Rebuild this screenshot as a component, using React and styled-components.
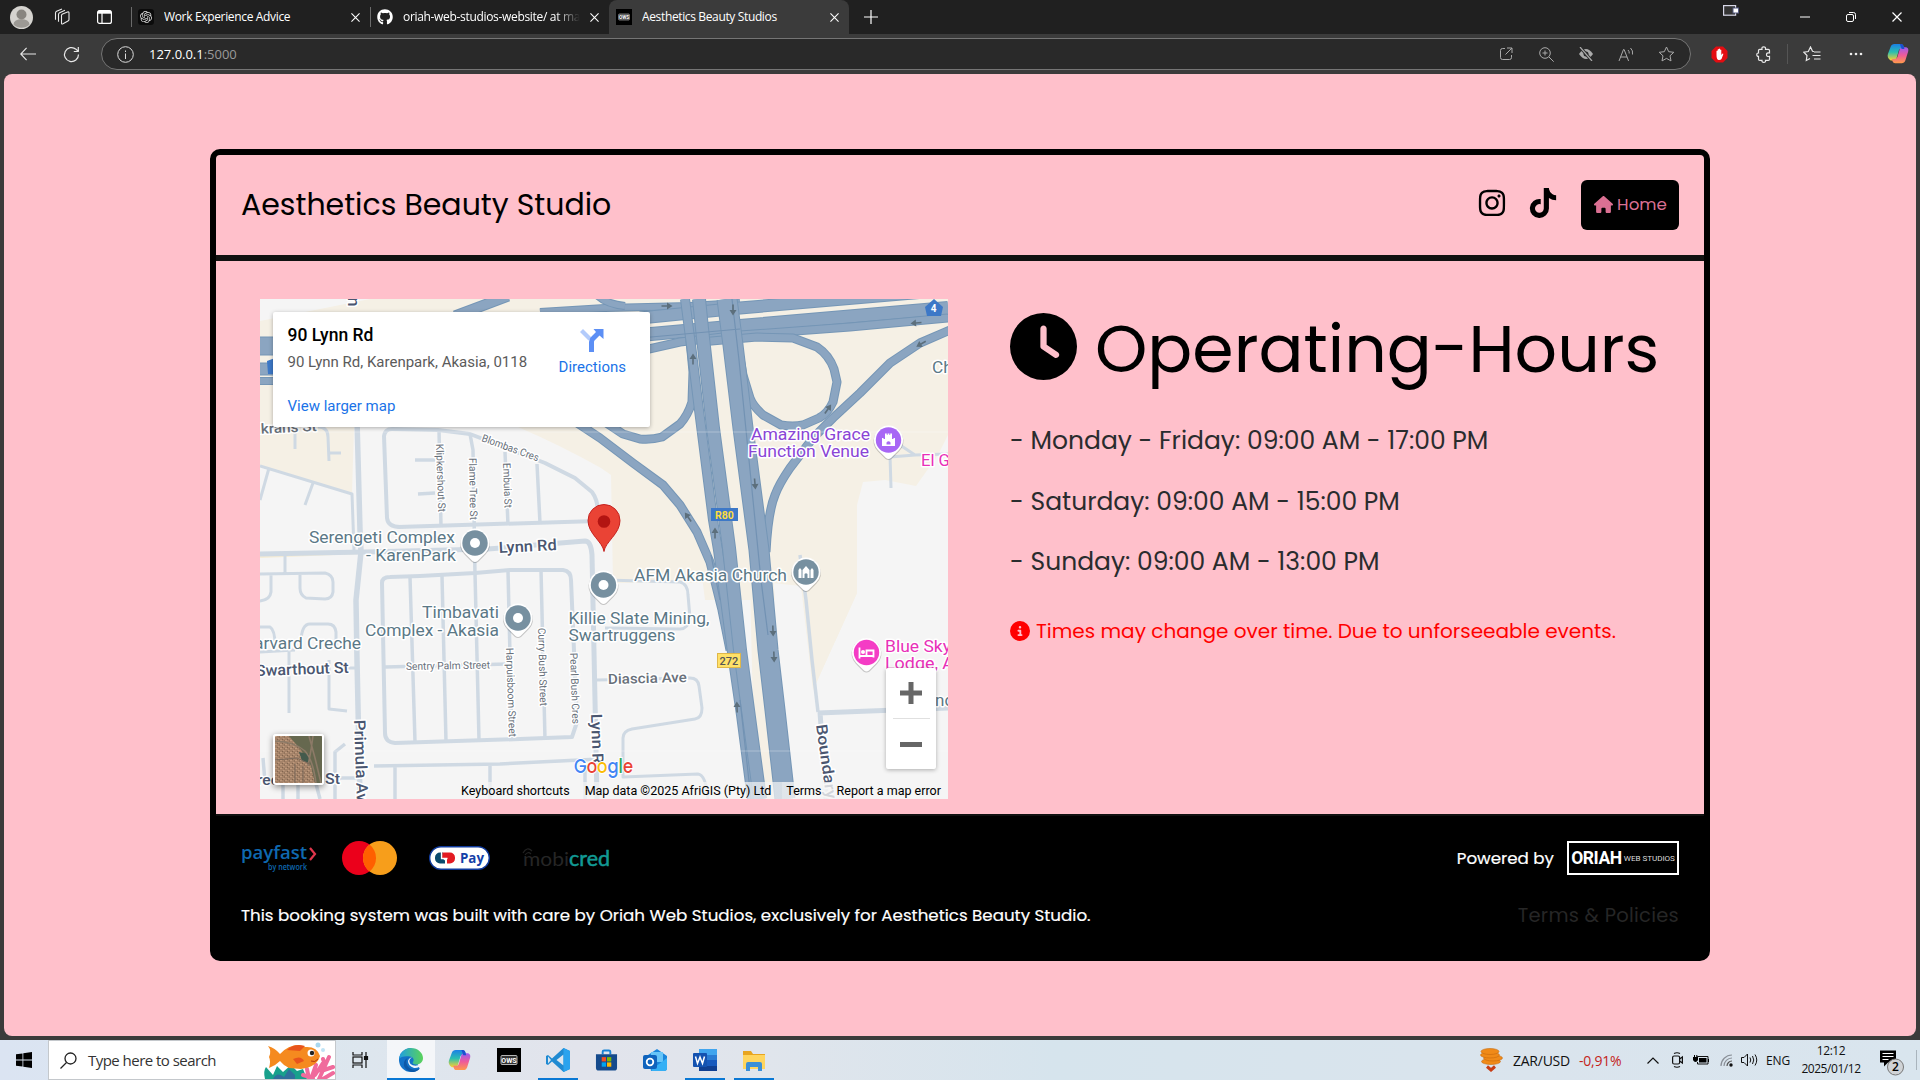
import React from "react";
import styled, { createGlobalStyle } from "styled-components";
import { FaInstagram, FaTiktok, FaHouse, FaClock, FaCircleInfo, FaGithub } from "react-icons/fa6";
import { SiOpenai } from "react-icons/si";

const poppins = `Poppins, Inter, "Open Sans", sans-serif`;
const segoe = `"Segoe UI", "Open Sans", "Noto Sans", sans-serif`;
const roboto = `Roboto, "Liberation Sans", sans-serif`;

const GlobalStyle = createGlobalStyle`
  * { box-sizing: border-box; }
  body { margin: 0; background: #3b3b3b; overflow: hidden; }
  svg { display: block; flex: none; }
  p, h1, h2 { margin: 0; font-weight: 400; }
`;

/* ---------- Browser chrome ---------- */
const Screen = styled.div`
  width: 1920px;
  height: 1080px;
  display: flex;
  flex-direction: column;
  background: #3b3b3b;
  font-family: ${segoe};
`;
const TabStrip = styled.div`
  height: 34px;
  display: flex;
  align-items: center;
  background: #202020;
  color: #fff;
`;
const ChromeIcon = styled.div`
  width: ${(p) => p.$w}px;
  height: 34px;
  display: flex;
  align-items: center;
  justify-content: center;
  padding-bottom: ${(p) => p.$pb || 0}px;
  color: #fff;
  flex: none;
`;
const Tab = styled.div`
  width: ${(p) => p.$w}px;
  height: 34px;
  display: flex;
  align-items: center;
  padding: 0 10px 0 ${(p) => (p.$active ? 7 : 6)}px;
  gap: 10px;
  flex: none;
  background: ${(p) => (p.$active ? "#3b3b3b" : "transparent")};
  border-radius: 8px 8px 0 0;
`;
const Divider = styled.span`
  width: 1px;
  height: 20px;
  margin-left: ${(p) => p.$ml || 0}px;
  background: ${(p) => p.$color || "#6b6b6b"};
  flex: none;
`;
const TabTitle = styled.span`
  flex: 1;
  min-width: 0;
  overflow: hidden;
  white-space: nowrap;
  font-size: 12px;
  letter-spacing: ${(p) => p.$ls || 0}px;
  line-height: 34px;
  mask-image: ${(p) => (p.$fade ? "linear-gradient(90deg, #000 86%, transparent)" : "none")};
`;
const Spacer = styled.div`
  flex: 1;
`;
const Toolbar = styled.div`
  height: 40px;
  display: flex;
  align-items: center;
  padding-left: 10px;
  color: #fff;
`;
const AddressBar = styled.div`
  width: 1590px;
  height: 32px;
  margin-left: 3px;
  display: flex;
  align-items: center;
  border: 1px solid #757575;
  border-radius: 16px;
  background: #292929;
  padding: 0 4px 0 15px;
`;
const Url = styled.span`
  margin-left: 15px;
  font-size: 13px;
  letter-spacing: -0.02px;
  color: #fff;
  span { color: #9a9a9a; }
`;
const Viewport = styled.div`
  height: 962px;
  margin: 0 4px 4px;
  border-radius: 8px;
  background: #ffc0cb;
  padding: 75px 206px 0;
`;

/* ---------- Page ---------- */
const Card = styled.div`
  height: 812px;
  border: 6px solid #000;
  border-radius: 10px;
  display: flex;
  flex-direction: column;
  font-family: ${poppins};
  background: linear-gradient(#ffc0cb 80%, #000 80%);
  overflow: hidden;
`;
const Header = styled.header`
  height: 106px;
  padding: 0 25px;
  display: flex;
  align-items: center;
  border-bottom: 6px solid #111;
  flex: none;
`;
const Brand = styled.h1`
  flex: 1;
  font-size: 30px;
  white-space: nowrap;
  color: #000;
`;
const Social = styled.a`
  display: flex;
  margin-right: ${(p) => p.$gap}px;
  padding-bottom: ${(p) => p.$pb}px;
  color: #000;
`;
const HomeButton = styled.a`
  width: 98px;
  height: 50px;
  display: flex;
  align-items: center;
  justify-content: center;
  gap: 4px;
  border-radius: 6px;
  background: #000;
  color: #db7093;
  font-size: 16.7px;
  padding: 0 0 2px 1px;
`;
const Main = styled.main`
  height: 553px;
  padding: 38px 44px 0;
  display: flex;
  gap: 62px;
  background: #ffc0cb;
  flex: none;
`;
const Hours = styled.section`
  flex: 1;
  padding-top: 12px;
  white-space: nowrap;
`;
const HoursTitle = styled.h2`
  height: 76px;
  display: flex;
  align-items: center;
  gap: 18px;
  font-size: 66.6px;
  color: #000;
  svg { margin-top: -6px; }
  span { margin-top: -1px; }
`;
const HoursList = styled.div`
  display: grid;
  grid-auto-rows: 60.5px;
  align-items: center;
  margin-top: 24px;
`;
const HoursLine = styled.p`
  font-size: 25px;
  color: #2a2c2e;
`;
const Notice = styled.p`
  display: flex;
  align-items: center;
  gap: 6px;
  margin-top: 23px;
  height: 30px;
  font-size: 20px;
  color: #f00;
`;
const Footer = styled.footer`
  flex: 1;
  background: #000;
  border-top: 2px solid #111;
  padding: 25px 25px 0;
  color: #fff;
`;
const FooterRow = styled.div`
  display: flex;
  align-items: center;
  justify-content: space-between;
  height: ${(p) => p.$h}px;
  margin-top: ${(p) => p.$mt || 0}px;
`;
const Logos = styled.div`
  display: flex;
  align-items: center;
`;
const LogoSlot = styled.div`
  margin-left: ${(p) => p.$ml || 0}px;
`;
const FooterText = styled.p`
  font-size: 16.68px;
  white-space: nowrap;
  -webkit-text-stroke: 0.2px #fff;
`;
const Terms = styled.a`
  font-size: 19.5px;
  color: #262626;
  letter-spacing: 0.25px;
`;
const Powered = styled.div`
  display: flex;
  align-items: center;
  gap: 13px;
`;
const OriahLogo = styled.div`
  width: 112px;
  height: 34px;
  border: 2px solid #fff;
  display: flex;
  align-items: center;
  justify-content: center;
  gap: 2px;
  font-family: ${roboto};
  white-space: nowrap;
  b { font-size: 17.5px; font-weight: 700; letter-spacing: -0.4px; }
  small { font-size: 8.1px; letter-spacing: -0.05px; color: #ddd; }
`;

/* ---------- Map ---------- */
const MapFrame = styled.div`
  position: relative;
  width: 688px;
  height: 500px;
  flex: none;
  overflow: hidden;
  font-family: ${roboto};
`;
const PlaceCard = styled.div`
  position: absolute;
  left: 13px;
  top: 13px;
  width: 377px;
  height: 115px;
  padding: 13px 24px 0 14.5px;
  display: flex;
  justify-content: space-between;
  background: #fff;
  border-radius: 2px;
  box-shadow: 0 1px 4px rgba(0, 0, 0, 0.3);
  white-space: nowrap;
`;
const PlaceName = styled.div`
  font-size: 17.5px;
  line-height: 21px;
  font-weight: 500;
  color: #000;
`;
const PlaceAddress = styled.div`
  margin-top: 6px;
  font-size: 15px;
  line-height: 20px;
  color: #5b5b5b;
`;
const MapLink = styled.a`
  display: block;
  margin-top: ${(p) => p.$mt}px;
  font-size: 15px;
  line-height: 20px;
  color: #1a73e8;
`;
const Directions = styled.div`
  display: flex;
  flex-direction: column;
  align-items: center;
  padding-top: 3px;
`;
const ZoomControl = styled.div`
  position: absolute;
  right: 12px;
  bottom: 30px;
  width: 50px;
  height: 101px;
  background: #fff;
  border-radius: 2px;
  box-shadow: 0 1px 4px rgba(0, 0, 0, 0.3);
  display: grid;
  grid-template-rows: 50px 1px 50px;
  place-items: center;
  hr { width: 37px; height: 1px; margin: 0; border: 0; background: #e0e0e0; }
`;
const Thumb = styled.div`
  position: absolute;
  left: 13px;
  top: 435px;
  width: 51px;
  height: 51px;
  border: 2px solid #fff;
  border-radius: 3px;
  box-shadow: 0 2px 6px rgba(0, 0, 0, 0.45);
  overflow: hidden;
`;
const MapFooter = styled.div`
  position: absolute;
  right: 0;
  bottom: 0;
  height: 17px;
  padding: 0 7px 0 5px;
  display: flex;
  align-items: center;
  gap: 15px;
  background: linear-gradient(90deg, rgba(245, 245, 245, 0.7) 326px, rgba(245, 245, 245, 0.8) 326px);
  font-size: 12.52px;
  color: #000;
  white-space: nowrap;
`;

/* ---------- Taskbar ---------- */
const Taskbar = styled.div`
  height: 40px;
  display: flex;
  align-items: center;
  background: linear-gradient(90deg, #dbe4f2 0%, #dbe7ef 14%, #e2e4ec 30%, #e0e5ec 40%, #d6e4ed 55%, #dae4ed 80%, #d9e5ee 100%);
  color: #111;
`;
const StartButton = styled.div`
  width: 48px;
  display: flex;
  justify-content: center;
`;
const SearchBox = styled.div`
  width: 288px;
  height: 40px;
  display: flex;
  align-items: center;
  padding-left: 11px;
  background: #fff;
  border: 1px solid #c4c8cc;
  font-size: 15px;
  letter-spacing: -0.53px;
  color: #333;
  span { flex: 1; margin-left: 11px; white-space: nowrap; }
`;
const AppSlot = styled.div`
  width: ${(p) => p.$w || 49}px;
  height: 40px;
  display: flex;
  align-items: center;
  justify-content: center;
  background: ${(p) => (p.$active ? "rgba(255,255,255,.65)" : "transparent")};
  background-image: ${(p) => (p.$open || p.$active ? "linear-gradient(#0a78d4, #0a78d4)" : "none")};
  background-repeat: no-repeat;
  background-position: bottom center;
  background-size: ${(p) => (p.$active ? "100%" : "40px")} 2px;
`;
const TrayItem = styled.div`
  width: ${(p) => p.$w}px;
  display: flex;
  justify-content: ${(p) => (p.$start ? "flex-start" : "center")};
  padding-top: ${(p) => p.$pt || 0}px;
  white-space: nowrap;
  flex: none;
  font-size: ${(p) => p.$fs || 14}px;
  letter-spacing: ${(p) => p.$ls || 0}px;
  color: ${(p) => p.$color || "#111"};
`;
const Clock = styled.div`
  width: 72px;
  font-size: 12px;
  line-height: 18px;
  letter-spacing: -0.45px;
  text-align: center;
  flex: none;
`;

const CloseX = ({ s = 9, w = 1.2 }) => (
  <svg width={s} height={s} viewBox="0 0 10 10" stroke="#fff" strokeWidth={w}><path d="M.5.5l9 9M9.5.5l-9 9" /></svg>
);
const Copilot = ({ s }) => (
  <svg width={s} height={s} viewBox="0 0 24 24">
    <defs>
      <linearGradient id={`cl${s}`} x1="0" y1="0" x2="0" y2="1"><stop offset="0" stopColor="#1a7fe8" /><stop offset=".5" stopColor="#2bbfb0" /><stop offset="1" stopColor="#ffd02e" /></linearGradient>
      <linearGradient id={`cr${s}`} x1="0" y1="0" x2="0" y2="1"><stop offset="0" stopColor="#9a5cf0" /><stop offset=".5" stopColor="#ee5a9b" /><stop offset="1" stopColor="#ff9a4a" /></linearGradient>
    </defs>
    <path d="M8 2h7c2 0 2.600 1 3.200 3l.6 2h-3c-2 0-2.600 1-3.200 3l-2 7c-.6 2-1.400 3-3.400 3H4C1 18 .2 15.500 1 13L4 5c.8-2 2-3 4-3z" fill={`url(#cl${s})`} transform="translate(0 -1)" />
    <path d="M16 22H9c-2 0-2.600-1-3.200-3l-.4-1.500h2.800c2 0 2.800-1 3.400-3l2-7c.6-2 1.400-3 3.400-3h3c3 0 3.800 2.500 3 5l-3 9.500c-.8 2-2 3-4 3z" fill={`url(#cr${s})`} />
    <path d="M14 1h1.500c1.500 0 2.300 1 2.800 3l.7 2.500h-3L14 1z" fill="#1d4fd0" />
  </svg>
);
const OwsIcon = ({ s }) => (
  <svg width={s} height={s} viewBox="0 0 24 24">
    <rect width="24" height="24" fill="#000" />
    <rect x="4" y="7.500" width="16" height="9" rx="1" fill="#333" stroke="#ddd" strokeWidth=".8" />
    <text x="12" y="14.700" fontSize="7" fontWeight="700" textAnchor="middle" fill="#fff" fontFamily="Roboto, sans-serif">OWS</text>
  </svg>
);

function BrowserTabs() {
  return (
    <TabStrip>
      <ChromeIcon $w={43}>
        <svg width="23" height="23" viewBox="0 0 23 23"><circle cx="11.500" cy="11.500" r="11.500" fill="#d5d3cf" /><circle cx="11.500" cy="8.500" r="5" fill="#888580" /><path d="M3.500 18.500a8 5.500 0 0 1 16 0 11.500 11.500 0 0 1-16 0z" fill="#9c9994" /></svg>
      </ChromeIcon>
      <ChromeIcon $w={38}>
        <svg width="18" height="18" viewBox="0 0 18 18" fill="none" stroke="#e8e8e8" strokeWidth="1.100" strokeLinejoin="round"><path d="M8.500 7.500Q8.500 6.300 9.600 5.900L14.500 4Q16 3.500 16 5V11.500Q16 12.500 15 13L10 15.800Q8.500 16.500 8.500 15zM5.500 13.800V6.500Q5.500 5.200 6.600 4.700L12 2.200M2.500 11.800V5Q2.500 3.700 3.600 3.200L9 1" /></svg>
      </ChromeIcon>
      <ChromeIcon $w={46}>
        <svg width="15" height="14" viewBox="0 0 15 14" fill="none" stroke="#fff" strokeWidth="1.200"><rect x=".6" y=".6" width="13.800" height="12.800" rx="2" /><path d="M1 2.200h13" strokeWidth="3" /><path d="M5 3v10" /></svg>
      </ChromeIcon>
      <Divider $ml={4} />
      <Tab $w={238}>
        <svg width="16" height="16" viewBox="0 0 16 16"><rect width="16" height="16" rx="3" fill="#0b0b0b" /><g transform="translate(2 2)" color="#ddd"><SiOpenai size={12} /></g></svg>
        <TabTitle $ls={-0.34}>Work Experience Advice</TabTitle>
        <CloseX />
      </Tab>
      <Divider />
      <Tab $w={238}>
        <FaGithub size={16} color="#fff" />
        <TabTitle $fade $ls={-0.32}>oriah-web-studios-website/ at main</TabTitle>
        <CloseX />
      </Tab>
      <Tab $w={240} $active>
        <OwsIcon s={16} />
        <TabTitle $ls={-0.36}>Aesthetics Beauty Studios</TabTitle>
        <CloseX />
      </Tab>
      <ChromeIcon $w={44}>
        <svg width="14" height="14" viewBox="0 0 14 14" stroke="#fff" strokeWidth="1.200"><path d="M7 0v14M0 7h14" /></svg>
      </ChromeIcon>
      <Spacer />
      <ChromeIcon $w={102} $pb={13}>
        <svg width="16" height="11" viewBox="0 0 16 11"><rect x=".6" y=".6" width="12" height="9.600" fill="#333" stroke="#d8d8e8" strokeWidth="1.200" /><rect x="10" y="3" width="5.500" height="5" fill="#fff" stroke="#555a80" /></svg>
      </ChromeIcon>
      <ChromeIcon $w={46}><svg width="10" height="2"><path d="M0 1h10" stroke="#fff" /></svg></ChromeIcon>
      <ChromeIcon $w={46}>
        <svg width="10" height="10" viewBox="0 0 10 10" fill="none" stroke="#fff"><rect x=".5" y="2.500" width="7" height="7" rx="1.500" /><path d="M3 .5h4.500a2 2 0 0 1 2 2V7" /></svg>
      </ChromeIcon>
      <ChromeIcon $w={46}><CloseX s={10} /></ChromeIcon>
    </TabStrip>
  );
}

function BrowserToolbar() {
  return (
    <Toolbar>
      <ChromeIcon $w={35}>
        <svg width="16" height="14" viewBox="0 0 17 14" fill="none" stroke="#e8e8e8" strokeWidth="1.200"><path d="M7 .5.800 7 7 13.500M1 7h16" /></svg>
      </ChromeIcon>
      <ChromeIcon $w={53}>
        <svg width="17" height="17" viewBox="0 0 17 17" fill="none" stroke="#e8e8e8" strokeWidth="1.200"><path d="M15.500 8.500A7 7 0 1 1 13 3.200L15.300 5.500M15.300 1v4.500h-4.500" /></svg>
      </ChromeIcon>
      <AddressBar>
        <svg width="17" height="17" viewBox="0 0 17 17" fill="none" stroke="#ddd"><circle cx="8.500" cy="8.500" r="7.800" /><path d="M8.500 7.500V13M8.500 4.500V6" /></svg>
        <Url>127.0.0.1<span>:5000</span></Url>
        <Spacer />
        <ChromeIcon $w={40}><svg width="14" height="14" viewBox="0 0 14 14" fill="none" stroke="#aaa"><path d="M6 1.500H3.500a2 2 0 0 0-2 2v7a2 2 0 0 0 2 2h7a2 2 0 0 0 2-2V8M8 1h5v5M13 1 6.500 7.500" /></svg></ChromeIcon>
        <ChromeIcon $w={40}><svg width="15" height="15" viewBox="0 0 15 15" fill="none" stroke="#aaa"><circle cx="6" cy="6" r="5.300" /><path d="M6 3.500v5M3.500 6h5M10 10l4.700 4.700" /></svg></ChromeIcon>
        <ChromeIcon $w={40}><svg width="16" height="14" viewBox="0 0 16 14"><path d="M1 7q7-10 14 0-7 10-14 0z" fill="#aaa" /><circle cx="8" cy="7" r="2.500" fill="#292929" /><path d="M2 0l12 14" stroke="#292929" strokeWidth="3" /><path d="M2 0l12 14" stroke="#aaa" strokeWidth="1.200" /></svg></ChromeIcon>
        <ChromeIcon $w={40}><svg width="17" height="15" viewBox="0 0 17 15" fill="none" stroke="#aaa"><path d="M1 14 5.500 2.500h.6L10.600 14M2.600 10h6.500M10 3q1.500 1.500 1.200 3.500M12.500 1q2.800 2.500 2 6.500" /></svg></ChromeIcon>
        <ChromeIcon $w={40}><svg width="17" height="16" viewBox="0 0 17 16" fill="none" stroke="#aaa"><path d="m8.500 1 2.200 4.700 5.100.6-3.800 3.500 1 5.100-4.500-2.500L4 14.900l1-5.100L1.200 6.300l5.100-.6z" /></svg></ChromeIcon>
      </AddressBar>
      <ChromeIcon $w={56}>
        <svg width="17" height="17" viewBox="0 0 17 17"><path d="M5 .5h7L16.500 5v7L12 16.500H5L.5 12V5z" fill="#e40d12" /><path d="M5.500 9V5q1-.8 1.200 0V3.500q1-.8 1.200 0V3q1-.8 1.200 0v1q1-.8 1.200 0v5l1.300-1.500q1 0 .7.800L10.500 13q-1 1.300-3 1-2-.5-2-5z" fill="#fff" /></svg>
      </ChromeIcon>
      <ChromeIcon $w={34}>
        <svg width="17" height="17" viewBox="0 0 17 17" fill="none" stroke="#e8e8e8" strokeWidth="1.200"><path d="M2.500 4.500q0-1.200 1.200-1.200H6q-.5-2.500 1.700-2.500t1.800 2.500h2.800q1.200 0 1.200 1.200V7q-3-.6-3 1.700t3 1.700v2.800q0 1.200-1.200 1.200H9.500q.4 2-1.700 2T6 14.400H3.700q-1.200 0-1.200-1.200v-2.800Q.8 10.500.8 8.700T2.500 7z" /></svg>
      </ChromeIcon>
      <ChromeIcon $w={13}><Divider $color="#555" /></ChromeIcon>
      <ChromeIcon $w={36}>
        <svg width="18" height="16" viewBox="0 0 18 16" fill="none" stroke="#e8e8e8" strokeWidth="1.200"><path d="M11 5.500 9.500 5.300 7.500 1 5.300 5.500.8 6.200 4 9.500 3.300 14.500 7 12.500M11 6h6.500M9.500 9.500h8M11 13h6.500" /></svg>
      </ChromeIcon>
      <ChromeIcon $w={51}>
        <svg width="14" height="4" fill="#eee"><circle cx="2" cy="2" r="1.300" /><circle cx="7" cy="2" r="1.300" /><circle cx="12" cy="2" r="1.300" /></svg>
      </ChromeIcon>
      <ChromeIcon $w={34}><Copilot s={22} /></ChromeIcon>
    </Toolbar>
  );
}

/* Streets, one polyline per entry: [path, width] */
const streets = [
  ["M357 420 360 530 361 552 356 600 357 660 360 799", 5.5],
  ["M260 554 365 552 488 549 585 541Q591 541 592 555L595 700 597 799", 5],
  ["M400 527Q388 527 387 518L384 436Q385 429 392 429L438 430 470 434 545 463 575 478 592 492Q600 503 597 521L398 527", 4],
  ["M439 430 441 527M470 434 473 450 475 575M505 452 508 525M537 464 540 523M415 460h20M418 494l17-1", 3.5],
  ["M318 427Q328 427 328 437L329 461M328 453h13M295 433v16M260 466 352 494 354 550M269 468 260 500M313 483 305 505", 3],
  ["M260 574 325 573Q333 575 333 582V592Q332 599 325 599L306 598Q300 595 300 588V575M285 552v21M271 575V592Q270 600 260 601", 3],
  ["M301 644Q301 624 310 624H328Q335 624 336 632V645M260 627H270Q275 630 275 645M260 652 295 650M289 652V713M329 660V709L347 711M345 668h12", 3],
  ["M382 583Q382 577 390 577L420 576 475 573 510 570H563Q571 571 571 580L577 722 572 737 520 739 395 743Q385 742 385 733Z", 4],
  ["M410 577 415 742M442 576 446 742M475 573 479 740M508 571 512 740M541 570 545 740M385 667 508 664", 3.5],
  ["M374 766 500 764 600 759M395 767V799M490 765V799M585 765V799M263 758 265 782M345 744 335 752V799M340 778h20M283 775V799M315 780 320 799M298 785v14", 3.5],
  ["M605 580 680 582Q688 584 688 595L690 618Q688 629 680 629L605 628", 3],
  ["M597 680 690 678Q698 678 699 686L702 708Q702 718 695 719L632 729Q623 731 623 738V777L698 774Q706 775 708 799", 3],
  ["M800 555 806 600 812 660 818 712", 3.5],
  ["M818 713 948 708M820 712 826 799", 5],
  ["M890 455 891 488M890 457 915 455 948 454M900 445 915 455", 3],
];
const highways = [
  ["M455 316 508 296", 10], ["M540 312 605 308 690 306 740 303", 7], ["M596 294Q605 304 625 306", 7],
  ["M260 346h20", 18], ["M260 369h20", 12], ["M260 381h20", 7],
  ["M640 318 740 308 948 290", 12],
  ["M640 335 740 326 948 308", 13],
  ["M640 351 680 342 740 335 850 327 948 318", 8],
  ["M700 342 757 337 793 338 817 347Q829 355 834 369L837 382 833 402Q828 413 819 418L803 425Q793 427 781 425L763 415Q753 406 750 398L743 375 733 320", 8],
  ["M690 340 693 372 692 402Q688 415 680 424L662 437Q652 440 640 439L623 434 605 422", 8],
  ["M565 415 600 438 633 463 663 485 680 505 697 532 710 562 722 610 730 650", 8],
  ["M950 330 920 343 890 363 860 393 833 418 813 438 790 468Q779 484 775 495 768 512 766 552", 8],
  ["M685 299 691 345 699 410 713 520 718 550 725 600 733 660 741 715 752 799", 9],
  ["M699 299 703 338 713 428 729 548 740 650 748 710 760 799", 13],
  ["M727 299 733 345 743 428 759 550 768 650 775 710 785 799", 20],
];
const lanes = "M732 299 739 360 751 480 761 580 768 635M711 555 720 600M740 700 751 799M640 338 740 329";
const arrows = [
  [667, 306, 90], [733, 310, 180], [693, 359, 0], [916, 323, -95], [921, 344, -120], [828, 409, 35],
  [755, 484, 175], [688, 517, -35], [715, 533, 0], [773, 631, 178], [774, 657, 178], [737, 707, -2],
];

const MapLabel = styled.text`
  font-family: ${roboto};
  font-size: ${(p) => p.$size || 17}px;
  font-weight: ${(p) => p.$weight || 400};
  fill: ${(p) => p.$fill || "#5b7886"};
  stroke: #fff;
  stroke-width: 3px;
  stroke-linejoin: round;
  paint-order: stroke;
`;
const Label = ({ x, y, w, r, children, ...rest }) => (
  <MapLabel x={x} y={y} textLength={w} lengthAdjust="spacingAndGlyphs" transform={r ? `rotate(${r} ${x} ${y})` : undefined} {...rest}>{children}</MapLabel>
);
const Poi = ({ x, y, fill = "#7790a0", children }) => (
  <g transform={`translate(${x} ${y})`}>
    <path d="M0-15A15 15 0 0 1 10.500 10.500L3 18Q0 20 -3 18L-10.500 10.500A15 15 0 0 1 0-15z" fill="#0003" transform="translate(0 1)" />
    <path d="M0-14.500A14.500 14.500 0 0 1 10.300 10.300L2.500 18Q0 20-2.500 18L-10.300 10.300A14.500 14.500 0 0 1 0-14.500z" fill="#fff" />
    <circle r="12.700" fill={fill} />
    {children || <circle r="5" fill="#fff" />}
  </g>
);
const small = { $size: 10.5, $fill: "#68707a" };
const road = { $size: 15.5, $fill: "#4a5670", $weight: 500 };

function StreetMap() {
  return (
    <svg width="688" height="500" viewBox="260 299 688 500">
      <rect x="260" y="299" width="688" height="500" fill="#f5f0e5" />
      <g fill="#f5f5f5">
        <path d="M260 299H370L260 321z" />
        <path d="M260 466 352 494 354 427H518Q560 445 601 468L611 475 613 583H815L813 690 857 593V505L863 482 885 480 916 486 938 455 948 435V799H260z" />
      </g>
      <path d="M260 556 360 552" stroke="#f5ecd5" strokeWidth="4" />
      <path d="M750 583H772L793 799H755zM700 560 772 560 775 600H705zM772 583 801 586 813 690 857 593V550H765z" fill="#f5f0e5" />
      <g fill="none" stroke="#cfd9e3" strokeLinejoin="round">
        {streets.map(([d, w]) => <path key={d} d={d} strokeWidth={w} />)}
      </g>
      <g fill="none" strokeLinejoin="round">
        {highways.map(([d, w]) => (
          <g key={d}><path d={d} stroke="#7596b6" strokeWidth={w + 1} /><path d={d} stroke="#8ba5c1" strokeWidth={w - 1} /></g>
        ))}
        <path d={lanes} stroke="#7292b3" strokeWidth="1.200" />
      </g>
      <path d="M260 432H948M260 751H948" stroke="#fff" strokeOpacity=".3" />
      {arrows.map(([x, y, r]) => (
        <path key={`${x}-${y}`} transform={`translate(${x} ${y}) rotate(${r})`} d="M0-5.500 3.500 0H.8V5.500H-.8V0H-3.500z" fill="#5c6f7c" />
      ))}
      <Label x={348} y={297} r={90} {...road} $size={17}>n</Label>
      <Label x={257} y={434} w={60} r={-3} {...road} $size={14} $fill="#68707a">ikrans St</Label>
      <Label x={481} y={441} w={60} r={20} {...small}>Blombas Cres</Label>
      <Label x={436} y={444} w={68} r={88} {...small}>Klipkershout St</Label>
      <Label x={469} y={458} w={62} r={89} {...small}>Flame Tree St</Label>
      <Label x={503} y={463} w={45} r={88} {...small}>Embuia St</Label>
      <Label x={309} y={543} w={146}>Serengeti Complex</Label>
      <Label x={366} y={561} w={90}>- KarenPark</Label>
      <Label x={499} y={553} w={58} r={-3} {...road}>Lynn Rd</Label>
      <Label x={422} y={618} w={77}>Timbavati</Label>
      <Label x={365} y={636} w={134}>Complex - Akasia</Label>
      <Label x={254} y={649} w={107}>arvard Creche</Label>
      <Label x={256} y={676} w={93} r={-2} {...road}>Swarthout St</Label>
      <Label x={406} y={670} w={84} r={-1} {...small}>Sentry Palm Street</Label>
      <Label x={506} y={648} w={89} r={88} {...small}>Harpuisboom Street</Label>
      <Label x={538} y={628} w={78} r={88.500} {...small}>Curry Bush Street</Label>
      <Label x={570} y={653} w={71} r={88} {...small}>Pearl Bush Cres</Label>
      <Label x={354} y={720} w={82} r={88} {...road} $size={16}>Primula Av</Label>
      <Label x={591} y={714} w={50} r={88} {...road}>Lynn R</Label>
      <Label x={257} y={785} w={22} {...road}>ree</Label>
      <Label x={325} y={784} w={15} {...road}>St</Label>
      <Label x={568.5} y={624} w={141}>Killie Slate Mining,</Label>
      <Label x={568.5} y={641} w={107}>Swartruggens</Label>
      <Label x={634} y={581} w={153}>AFM Akasia Church</Label>
      <Label x={608} y={684} w={79} r={-1.500} {...road} $size={14} $fill="#68707a">Diascia Ave</Label>
      <Label x={816} y={725} w={75} r={82} {...road}>Boundary</Label>
      <Label x={932} y={373} w={30}>Che</Label>
      <Label x={751} y={440} w={119} $fill="#8a45d6">Amazing Grace</Label>
      <Label x={748} y={457} w={121} $fill="#8a45d6">Function Venue</Label>
      <Label x={921} y={466} w={38} $fill="#e830b8">El Ga</Label>
      <Label x={885} y={652} w={66} $fill="#e830b8">Blue Sky</Label>
      <Label x={885} y={669} w={69} $fill="#e830b8">Lodge, A</Label>
      <Label x={935} y={706} w={28}>nco</Label>
      <Poi x={475} y={543} /><Poi x={518} y={618} /><Poi x={603.5} y={585} />
      <Poi x={806} y={572}><path d="M-7.500 6V-2l1.500-2L-4.500-2V6zM4.500 6V-2L6-4 7.500-2V6zM-3.500 6V-2L0-6 3.500-2V6H1.500V2Q0 .5-1.500 2V6z" fill="#fff" /></Poi>
      <Poi x={888.500} y={440} fill="#a866f5"><path d="M-3.500-6.500H-1.700V-5H-.9V-6.500H.9V-5H1.700V-6.500H3.500V-1H5V-2H6.500V6H-6.500V-2H-5V-1H-3.500zM-2 4.500H2V2.500Q0 0-2 2.500z" fill="#fff" fillRule="evenodd" /></Poi>
      <Poi x={866.500} y={652.500} fill="#f43cc5"><path d="M-7-5V6M-7 3.500H7M7 5V-2H0V3" fill="none" stroke="#fff" strokeWidth="1.800" /><circle cx="-3.500" cy="-.5" r="2" fill="#fff" /></Poi>
      <g transform="translate(604 550)">
        <path d="M0 1.500C-1-8-16-16-16-29.500A16 16 0 0 1 16-29.500C16-16 1-8 0 1.500z" fill="#ea4335" stroke="#c5221f" />
        <circle cy="-28.500" r="6.300" fill="#b31412" />
      </g>
      <path d="M925 307 934 299 943 307 941 316H927z" fill="#3d78c7" /><text x="933.500" y="312" fontSize="10" fontWeight="700" fill="#fff" textAnchor="middle" fontFamily="Roboto">4</text>
      <path d="M267 361 275 358V374H268z" fill="#3d78c7" />
      <rect x="711" y="508" width="27" height="13" fill="#3d78c7" /><text x="724.500" y="518.500" fontSize="10.500" fontWeight="700" fill="#ffdc3c" textAnchor="middle" fontFamily="Roboto">R80</text>
      <rect x="717.500" y="653.500" width="23" height="14" fill="#ffe168" stroke="#dfb74a" /><text x="729" y="664.500" fontSize="11" fontWeight="500" fill="#555" textAnchor="middle" fontFamily="Roboto">272</text>
      <text x="574" y="773" fontSize="20" fontWeight="500" textLength="59" stroke="#fff" strokeWidth="2" paintOrder="stroke" fontFamily="Poppins, Roboto, sans-serif" lengthAdjust="spacingAndGlyphs"><tspan fill="#4285f4">G</tspan><tspan fill="#ea4335">o</tspan><tspan fill="#fbbc05">o</tspan><tspan fill="#4285f4">g</tspan><tspan fill="#34a853">l</tspan><tspan fill="#ea4335">e</tspan></text>
    </svg>
  );
}

function MapPanel() {
  return (
    <MapFrame>
      <StreetMap />
      <PlaceCard>
        <div>
          <PlaceName>90 Lynn Rd</PlaceName>
          <PlaceAddress>90 Lynn Rd, Karenpark, Akasia, 0118</PlaceAddress>
          <MapLink $mt={24}>View larger map</MapLink>
        </div>
        <Directions>
          <svg width="24" height="24" viewBox="0 0 24 24"><path d="M3 1 11.500 9.500 8.500 12.500 0 4z" fill="#b3cbfb" /><path d="M9 24V14Q9 11 11 9L16 4 13.500 1H23.500V11L19.500 7.500 14.500 12.500Q14 13 14 14V24z" fill="#5c8ff5" /></svg>
          <MapLink $mt={5}>Directions</MapLink>
        </Directions>
      </PlaceCard>
      <Thumb>
        <svg width="47" height="47" viewBox="0 0 47 47">
          <defs><pattern id="houses" width="5" height="4" patternUnits="userSpaceOnUse"><rect width="5" height="4" fill="#a58369" /><path d="M0 .5h2M3 2.500h1.500" stroke="#bf9a7d" /><path d="M2 3.500h1M4 1h1" stroke="#80654f" /></pattern></defs>
          <rect width="47" height="47" fill="url(#houses)" />
          <path d="M14 0H47V47H40L36 30 26 14z" fill="#66684f" /><path d="M24 16 34 18V27L27 25z" fill="#435a4c" />
          <path d="M0 5Q20 6 30 15 38 24 41 47M34 0 40 22 46 47M38 0 36 14 33 30" fill="none" stroke="#8c7a67" strokeWidth="1.600" /><path d="M0 24 22 22 35 28M20 28V47M28 30V47" stroke="#7a685a" fill="none" />
        </svg>
      </Thumb>
      <ZoomControl>
        <svg width="22" height="22"><path d="M11 0v22M0 11h22" stroke="#666" strokeWidth="5" /></svg>
        <hr />
        <svg width="22" height="5"><rect width="22" height="5" fill="#666" /></svg>
      </ZoomControl>
      <MapFooter>
        <span>Keyboard shortcuts</span><span>Map data ©2025 AfriGIS (Pty) Ltd</span><span>Terms</span><span>Report a map error</span>
      </MapFooter>
    </MapFrame>
  );
}

function PaymentLogos() {
  return (
    <Logos>
      <svg width="76" height="34" viewBox="0 0 76 34" fontFamily="Open Sans, sans-serif">
        <text x="0" y="17.500" fontSize="18.500" fontWeight="600" fill="#0f69b0" textLength="66" lengthAdjust="spacingAndGlyphs">payfast</text>
        <path d="M69 7 74 13 69 19" fill="none" stroke="#e0364c" strokeWidth="2.200" />
        <text x="27" y="29" fontSize="8.500" fontWeight="600" fill="#0f69b0" textLength="39" lengthAdjust="spacingAndGlyphs">by network</text>
      </svg>
      <LogoSlot $ml={25}>
        <svg width="55" height="34" viewBox="0 0 55 34">
          <circle cx="17" cy="17" r="17" fill="#eb001b" /><circle cx="38" cy="17" r="17" fill="#f79e1b" /><path d="M27.500 3.600a17 17 0 0 1 0 26.800 17 17 0 0 1 0-26.800z" fill="#ff5f00" />
        </svg>
      </LogoSlot>
      <LogoSlot $ml={32}>
        <svg width="61" height="24" viewBox="0 0 61 24">
          <rect x=".7" y=".7" width="59.600" height="22.600" rx="11.300" fill="#fff" stroke="#0f3a9c" strokeWidth="1.400" />
          <path d="M14 6.500H11a5 5 0 0 0-5 5v1a5 5 0 0 0 5 5h5V14.500L13 12z" fill="#0a4a6e" /><path d="M13.500 6.500H21a5 5 0 0 1 5 5v1a5 5 0 0 1-5 5H18V12H13z" fill="#e31b23" /><path d="M12.500 6V12.500h6" fill="none" stroke="#fff" strokeWidth="1.300" />
          <text x="31" y="17" fontSize="14.500" fontWeight="700" fill="#143fa8" textLength="24" lengthAdjust="spacingAndGlyphs" fontFamily="Open Sans">Pay</text>
        </svg>
      </LogoSlot>
      <LogoSlot $ml={32}>
        <svg width="88" height="24" viewBox="0 0 88 24" fontFamily="Lato, sans-serif">
          <path d="M1 7Q5 0 10 5M3 9Q6 5 9 8" fill="none" stroke="#222" strokeWidth="1.200" />
          <text x="1" y="20" fontSize="20" fill="#262626" textLength="46" lengthAdjust="spacingAndGlyphs">mobi</text>
          <text x="47" y="20" fontSize="20.500" fill="#129a94" stroke="#129a94" strokeWidth=".5" textLength="41" lengthAdjust="spacingAndGlyphs">cred</text>
        </svg>
      </LogoSlot>
    </Logos>
  );
}

function TaskbarRow() {
  return (
    <Taskbar>
      <StartButton><svg width="16" height="16" viewBox="0 0 16 16"><path d="M0 2.300 6.500 1.400V7.600H0zM7.300 1.300 16 0V7.600H7.300zM0 8.400H6.500V14.600L0 13.700zM7.300 8.400H16V16L7.300 14.700z" /></svg></StartButton>
      <SearchBox>
        <svg width="17" height="17" viewBox="0 0 17 17" fill="none" stroke="#222" strokeWidth="1.300"><circle cx="10.500" cy="6.500" r="5.500" /><path d="M6.500 10.500.5 16.500" /></svg>
        <span>Type here to search</span>
        <svg width="72" height="38" viewBox="0 0 72 38">
          <path d="M2 38Q0 30 3 26L10 34 14 25 20 31 28 24 34 30 40 28 44 38z" fill="#18a08c" /><path d="M10 38Q14 30 21 36L26 28 32 34 32 38z" fill="#2f6f9c" />
          <path d="M46 38 44 28M48 38 53 24M52 34 60 22M56 38 66 16M58 30 70 26M60 38 70 32M62 24 60 18M50 37 40 34" stroke="#f06b9c" strokeWidth="4" strokeLinecap="round" />
          <path d="M5 5Q12 7 17 13 25 4 36 4L42 6Q54 5 57 15 54 26 38 28L26 27Q20 24 17 20 12 25 6 27 8 20 6 16 9 10 5 5z" fill="#f58a1f" /><path d="M24 9Q31 2 42 5L37 10z" fill="#e8541c" /><path d="M30 18Q38 14 41 20L34 23z" fill="#e8541c" /><circle cx="48" cy="12" r="3.500" fill="#fff" /><circle cx="49" cy="12" r="2.200" fill="#222" /><path d="M48 20Q52 22 55 18" stroke="#b03a10" fill="none" />
          <circle cx="55" cy="4" r="2.500" fill="#a9d8f0" /><circle cx="60" cy="9" r="2" fill="#bfe3f5" />
        </svg>
      </SearchBox>
      <AppSlot $w={48}><svg width="17" height="16" viewBox="0 0 17 16" fill="none" stroke="#111" strokeWidth="1.200"><path d="M1 0v3h9V0M1 16v-3h9v3M14 0v16" /><rect x="1" y="5" width="9" height="6" /><path d="M12.500 4.500h3v3h-3z" fill="#111" /></svg></AppSlot>
      <AppSlot $w={3} />
      <AppSlot $w={48} $active>
        <svg width="24" height="24" viewBox="0 0 24 24"><defs><linearGradient id="eg" x1="0" x2="1"><stop offset="0" stopColor="#1f9fe0" /><stop offset="1" stopColor="#5ad35a" /></linearGradient></defs><path d="M12 0a12 12 0 0 0 0 24c3.500 0 6.500-1.300 8.500-3.600Z" fill="#1372c8" /><path d="M0 11C1 4 6 0 12 0c7 0 12 5 12 10 0 4-3 6.500-6.500 6.500-3 0-4.500-1-3.500-2.500 1.500-2 .5-5-3-5.500C6 7.500 1 9 0 11z" fill="url(#eg)" /><path d="M10.500 9C6 10 6 18 12 21c4 1.500 7 .5 9-1-3 5-9 5-13 2-5-4-4-11 2.500-13z" fill="#0c58a8" /><path d="M13 9.500Q8.500 12 11.500 16 15 19 22 16.500 20 20.500 15 20 9 18 9 13 10 9.500 13 9.500z" fill="#f0f5fa" /></svg>
      </AppSlot>
      <AppSlot><Copilot s={23} /></AppSlot>
      <AppSlot><OwsIcon s={24} /></AppSlot>
      <AppSlot $open><svg width="24" height="24" viewBox="0 0 24 24"><path d="M17.500 0 24 3V21L17.500 24 6 13.500 2 17 0 16V8L2 7 6 10.500z" fill="#1f8ad2" /><path d="M17.500 6.500 10.500 12l7 5.500z" fill="#dce6ef" /><path d="M17.500 0 24 3V21L17.500 24z" fill="#2aa3ee" /><path d="M2 8.500V15.500L5 12z" fill="#dce6ef" /></svg></AppSlot>
      <AppSlot><svg width="23" height="24" viewBox="0 0 24 24"><path d="M8 6V3.500Q8 2 9.500 2h5Q16 2 16 3.500V6" fill="none" stroke="#1783d6" strokeWidth="2" /><path d="M1 6H23V20Q23 23 20 23H4Q1 23 1 20z" fill="#154a8c" /><path d="M7 9h4.500v4.500H7z" fill="#f25022" /><path d="M12.500 9H17v4.500h-4.500z" fill="#7fba00" /><path d="M7 14.500h4.500V19H7z" fill="#00a4ef" /><path d="M12.500 14.500H17V19h-4.500z" fill="#ffb900" /></svg></AppSlot>
      <AppSlot><svg width="25" height="24" viewBox="0 0 25 24"><path d="M5 7 14 1 24 8V20Q24 23 21 23H8z" fill="#1a86dc" /><path d="M8 4H20V14H8z" fill="#67c5f8" /><path d="M8 22 24 10V20Q24 23 21 23H9z" fill="#35b0f5" /><rect y="7" width="14" height="14" rx="2" fill="#0f63bd" /><circle cx="7" cy="14" r="3.300" fill="none" stroke="#fff" strokeWidth="1.800" /></svg></AppSlot>
      <AppSlot $open><svg width="24" height="24" viewBox="0 0 24 24"><path d="M6 1H24V7H6z" fill="#41a5ee" /><path d="M6 7H24V12H6z" fill="#2b7cd3" /><path d="M6 12H24V18H6z" fill="#185abd" /><path d="M6 18H24V23H6z" fill="#103f91" /><rect y="5" width="14" height="14" rx="1" fill="#1452b0" /><path d="M2.500 8.500 4.500 15.500 7 9 9.500 15.500 11.500 8.500" fill="none" stroke="#fff" strokeWidth="1.500" /></svg></AppSlot>
      <AppSlot $open><svg width="24" height="21" viewBox="0 0 24 21"><path d="M1 1H9L11 4H23V18H1z" fill="#e8a520" /><path d="M1 5H23V19H1z" fill="#ffd55e" /><path d="M4 21V14Q4 12 6 12H18Q20 12 20 14V21H16V17H8V21z" fill="#3a8fd8" /></svg></AppSlot>
      <Spacer />
      <TrayItem $w={33} $start><svg width="23" height="24" viewBox="0 0 23 24"><g fill="#f08a18" stroke="#c86a0c" strokeWidth=".6"><ellipse cx="11" cy="13.500" rx="9.500" ry="3" /><ellipse cx="13" cy="10" rx="9.500" ry="3" /><ellipse cx="10" cy="7" rx="9.500" ry="3" /><ellipse cx="10" cy="3.500" rx="9" ry="3" /></g><path d="M7 18.500 11 22 15 18.500" stroke="#c83c14" strokeWidth="3" fill="none" /></svg></TrayItem>
      <TrayItem $w={66} $start $ls={-0.25}>ZAR/USD</TrayItem>
      <TrayItem $w={60} $start $ls={-0.25} $color="#c4231a">-0,91%</TrayItem>
      <TrayItem $w={28}><svg width="12" height="7"><path d="M.5 6.500 6 1l5.500 5.500" fill="none" stroke="#111" strokeWidth="1.200" /></svg></TrayItem>
      <TrayItem $w={20}><svg width="11" height="16" viewBox="0 0 11 16" fill="none" stroke="#111" strokeWidth="1.200"><rect x=".6" y="4" width="7" height="8" rx="1.500" /><path d="M7.600 7 10.400 5v6L7.600 9M2 1.500Q5 0 8 1.500M2 14.500Q5 16 8 14.500" /></svg></TrayItem>
      <TrayItem $w={28}><svg width="16" height="12" viewBox="0 0 16 12"><path d="M4.500 4V2.500H15V10H4.500V8" fill="none" stroke="#111" /><path d="M6 4h7.500v4.500H6zM0 3h5v3Q4 8 2.500 8T0 6zM1 1h1v2H1zM3.300 1h1v2h-1zM15 5h1v3h-1z" /></svg></TrayItem>
      <TrayItem $w={22}><svg width="13" height="13" viewBox="0 0 13 13" fill="none"><path d="M1 12A11 11 0 0 1 12 1M4 12a8 8 0 0 1 8-8" stroke="#8a9098" strokeWidth="1.200" /><path d="M7 12a5 5 0 0 1 5-5" stroke="#555" strokeWidth="1.200" /><circle cx="11" cy="11" r="1.700" fill="#111" /></svg></TrayItem>
      <TrayItem $w={24}><svg width="17" height="14" viewBox="0 0 17 14" fill="none" stroke="#111"><path d="M.5 4.500h2.500L6.500 1v12L3 9.500H.5zM9 4.500q1.500 2.500 0 5M11.500 3q2.500 4 0 8M14 1.500q3.500 5.500 0 11" /></svg></TrayItem>
      <TrayItem $w={34} $fs={12} $ls={-0.2}>ENG</TrayItem>
      <Clock>12:12<br />2025/01/12</Clock>
      <TrayItem $w={49} $pt={6}>
        <svg width="26" height="26" viewBox="0 0 26 26"><path d="M1 .5H17V12.500H9L5 16.500V12.500H1z" fill="#000" /><path d="M3.500 3.500h11M3.500 6.500h11M3.500 9.500h6" stroke="#fff" /><circle cx="16.500" cy="17" r="8" fill="#d0d3d6" stroke="#777" /><text x="16.500" y="21" fontSize="12" fontWeight="600" textAnchor="middle" fontFamily="Open Sans">2</text></svg>
      </TrayItem>
      <Divider $color="#a9b4bd" />
      <TrayItem $w={3} />
    </Taskbar>
  );
}

export default function App() {
  return (
    <Screen>
      <GlobalStyle />
      <BrowserTabs />
      <BrowserToolbar />
      <Viewport>
        <Card>
          <Header>
            <Brand>Aesthetics Beauty Studio</Brand>
            <Social $gap={21} $pb={4}><FaInstagram size={30} /></Social>
            <Social $gap={23} $pb={4}><FaTiktok size={30} /></Social>
            <HomeButton><FaHouse size={19} />Home</HomeButton>
          </Header>
          <Main>
            <MapPanel />
            <Hours>
              <HoursTitle><FaClock size={67} /><span>Operating-Hours</span></HoursTitle>
              <HoursList>
                <HoursLine>- Monday - Friday: 09:00 AM - 17:00 PM</HoursLine>
                <HoursLine>- Saturday: 09:00 AM - 15:00 PM</HoursLine>
                <HoursLine>- Sunday: 09:00 AM - 13:00 PM</HoursLine>
              </HoursList>
              <Notice><FaCircleInfo size={20} />Times may change over time. Due to unforseeable events.</Notice>
            </Hours>
          </Main>
          <Footer>
            <FooterRow $h={34}>
              <PaymentLogos />
              <Powered><FooterText>Powered by</FooterText><OriahLogo><b>ORIAH</b><small>WEB STUDIOS</small></OriahLogo></Powered>
            </FooterRow>
            <FooterRow $h={30} $mt={25}>
              <FooterText>This booking system was built with care by Oriah Web Studios, exclusively for Aesthetics Beauty Studio.</FooterText>
              <Terms>Terms &amp; Policies</Terms>
            </FooterRow>
          </Footer>
        </Card>
      </Viewport>
      <TaskbarRow />
    </Screen>
  );
}
